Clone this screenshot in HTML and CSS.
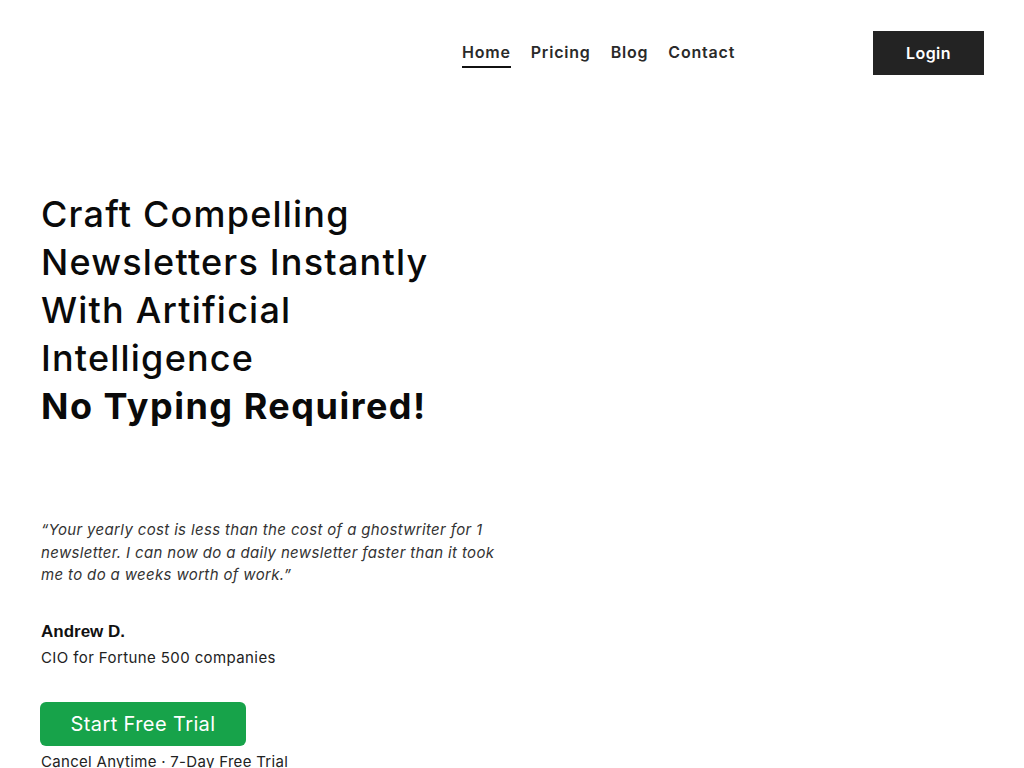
FILE: index.html
```html
<!DOCTYPE html>
<html lang="en">
<head>
<meta charset="utf-8">
<title>Newsletter AI</title>
<link rel="stylesheet" href="styles.css">
</head>
<body>
<header class="topbar">
  <div class="brand"></div>
  <nav class="nav">
    <a class="nav-link active" href="#">Home</a>
    <a class="nav-link" href="#">Pricing</a>
    <a class="nav-link" href="#">Blog</a>
    <a class="nav-link" href="#">Contact</a>
  </nav>
  <a class="login" href="#">Login</a>
</header>
<main class="hero">
  <h1 class="headline">Craft Compelling Newsletters Instantly With Artificial Intelligence<br><strong>No Typing Required!</strong></h1>
  <blockquote class="quote">“Your yearly cost is less than the cost of a ghostwriter for 1 newsletter. I can now do a daily newsletter faster than it took me to do a weeks worth of work.”</blockquote>
  <div class="author">
    <div class="author-name">Andrew D.</div>
    <div class="author-role">CIO for Fortune 500 companies</div>
  </div>
  <a class="cta" href="#">Start Free Trial</a>
  <div class="cta-note">Cancel Anytime · 7-Day Free Trial</div>
</main>
</body>
</html>
```
FILE: styles.css
```css
* { box-sizing: border-box; }
html, body { margin: 0; padding: 0; background: #fff; }
body {
  font-family: "Inter", "Open Sans", sans-serif;
  color: #111;
  overflow: hidden;
  height: 768px;
}
a { text-decoration: none; color: inherit; }

.topbar {
  display: grid;
  grid-template-columns: 422px auto 1fr;
  align-items: center;
  padding: 31px 40px 0 40px;
}
.nav {
  display: flex;
  gap: 20px;
  align-items: center;
}
.nav-link {
  font-size: 16px;
  font-weight: 600;
  letter-spacing: 0.8px;
  color: #2a2a2a;
  padding: 4px 0 4px;
  border-bottom: 2px solid transparent;
  line-height: 20px;
}
.nav-link.active {
  border-bottom-color: #111;
}
.login {
  justify-self: end;
  width: 111px;
  height: 44px;
  display: flex;
  align-items: center;
  justify-content: center;
  background: #232323;
  color: #fff;
  font-size: 16px;
  font-weight: 600;
  letter-spacing: 0.4px;
}

.hero {
  padding: 115px 40px 0 41px;
}
.headline {
  margin: 0;
  width: 430px;
  font-size: 36px;
  font-weight: 450;
  letter-spacing: 1.2px;
  line-height: 48px;
  color: #0a0a0a;
}
.headline strong { font-weight: 700; letter-spacing: 1.5px; }

.quote {
  margin: 89px 0 0 0;
  width: 466px;
  font-style: italic;
  font-size: 15px;
  letter-spacing: 0.35px;
  line-height: 22.5px;
  color: #333;
}
.author { margin-top: 33px; }
.author-name {
  font-family: "Liberation Sans", "Roboto", sans-serif;
  font-weight: 700;
  font-size: 17px;
  color: #111;
  line-height: 24px;
}
.author-role {
  font-size: 15px;
  letter-spacing: 0.4px;
  line-height: 24px;
  color: #222;
  margin-top: 2px;
}
.cta {
  display: inline-flex;
  align-items: center;
  justify-content: center;
  margin-top: 32px;
  margin-left: -1px;
  width: 206px;
  height: 44px;
  border-radius: 6px;
  background: #17a34a;
  color: #fff;
  font-size: 20px;
  font-weight: 400;
  letter-spacing: 0.4px;
}
.cta-note {
  font-size: 15px;
  letter-spacing: 0.3px;
  color: #222;
  line-height: 20px;
  margin-top: 6px;
}
```
